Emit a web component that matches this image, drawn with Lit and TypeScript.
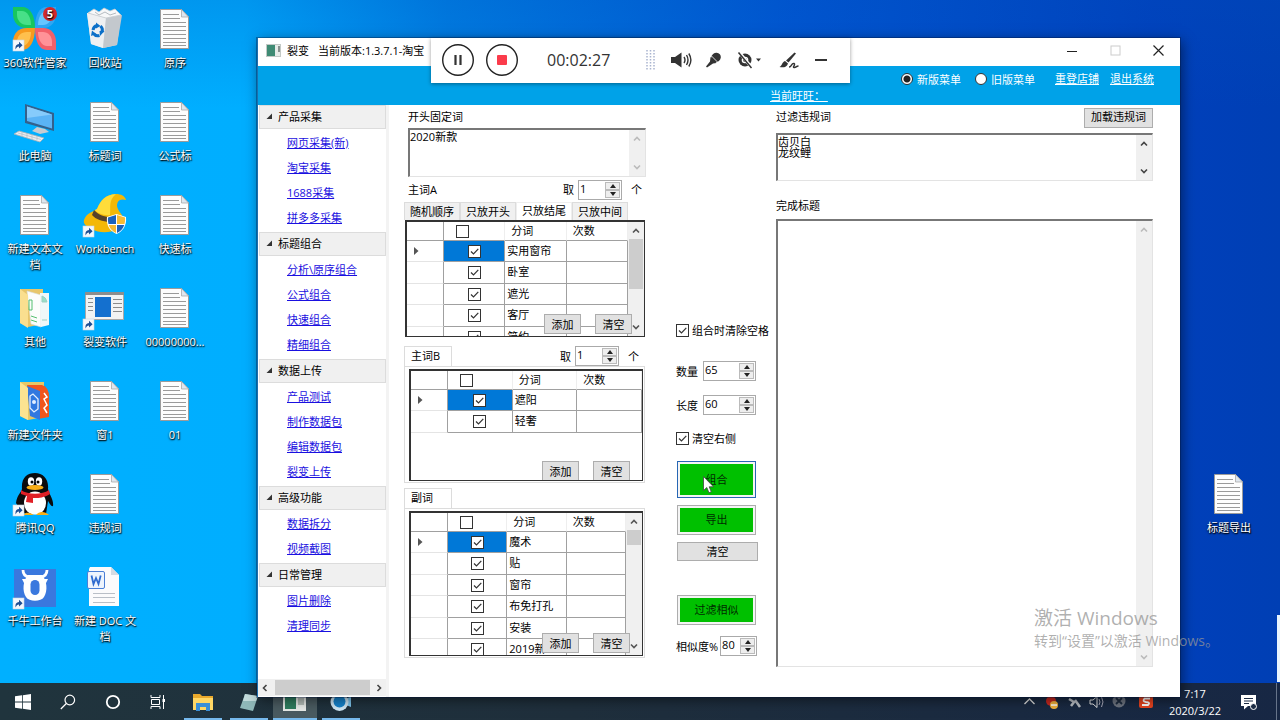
import { LitElement, html, svg, css, nothing } from "lit";
import type { TemplateResult, SVGTemplateResult } from "lit";
import { customElement, property } from "lit/decorators.js";
import { classMap } from "lit/directives/class-map.js";

const shortcut = svg`
  <rect x="0" y="33" width="11" height="11" fill="#f4f8fc" stroke="#c9d6e2" stroke-width=".6"/>
  <path d="M2.600 42.400C2 39 3.400 37 6 36.900V34.800L9.600 38.200 6 41.400V39.400C4.400 39.400 3.400 40.400 2.600 42.400Z" fill="#1f4f94"/>`;

const textDoc = svg`
  <path d="M7.500 2.500H28.500L35.500 10V41.500H7.500Z" fill="#fdfdfd" stroke="#9b9b9b"/>
  <path d="M28.500 2.500V10H35.500Z" fill="#dfe6ee" stroke="#a9a9a9" stroke-width=".8"/>
  <path d="M10 7.500H26M10 11.500H27M10 15.500H33M10 19.500H33M10 23.500H33M10 27.500H33M10 31.500H33M10 35.500H33M10 38.500H33" stroke="#8f8f8f" stroke-width=".9"/>`;

const glyphs: Record<string, SVGTemplateResult> = {
  doc: textDoc,
  petals: svg`
    <path d="M0 0H9C17 0 22 8 22 21H14C5 21 0 15 0 7Z" fill="#17c65f"/>
    <path d="M4 4H9C14 4 18 10 18 18H14C8 18 4 13 4 8Z" fill="#48e088"/>
    <path d="M43 0H34C26 0 22 8 22 21H30C38 21 43 15 43 7Z" fill="#2fa6f2"/>
    <path d="M39 4H34C29 4 25 10 25 18H30C35 18 39 13 39 8Z" fill="#66c6ff"/>
    <path d="M0 43H9C17 43 22 34 22 21H14C5 21 0 27 0 35Z" fill="#f79a1d"/>
    <path d="M4 39H9C14 39 18 33 18 25H14C8 25 4 29 4 35Z" fill="#ffc04d"/>
    <path d="M43 43H34C26 43 22 34 22 21H30C38 21 43 27 43 35Z" fill="#f2606a"/>
    <path d="M39 39H34C29 39 25 33 25 25H30C35 25 39 29 39 35Z" fill="#ff9298"/>
    <circle cx="37" cy="7" r="7" fill="#d3282c"/>
    <text x="37" y="11" text-anchor="middle" font-size="11" font-weight="700" fill="#fff">5</text>${shortcut}`,
  bin: svg`
    <path d="M4 6L38 8 34 38 20 41 8 37Z" fill="#d9dde1"/>
    <path d="M4 6L23 11 20 41 8 37Z" fill="#eef0f2"/>
    <path d="M23 11L39 8 34 38 20 41Z" fill="#c3c8cd"/>
    <path d="M5 6L11 2 16 5 21 1 27 4 32 2 38 8 23 11Z" fill="#f7f8f9" stroke="#c5cace" stroke-width=".8"/>
    <path d="M12 5L16 8 22 5 27 8 33 6" stroke="#b5bbc0" fill="none"/>
    <path d="M10 23A5.500 5.500 0 0 1 14 18.500M17.500 19A5.500 5.500 0 0 1 19 25M16.500 28.500A5.500 5.500 0 0 1 10.500 26.500" fill="none" stroke="#0c70c8" stroke-width="3"/>
    <path d="M13 15.500L17.500 19 13 21.500ZM21.500 24L17 29 16.500 24ZM8 29L9 23.500 13 27Z" fill="#0c70c8"/>`,
  pc: svg`
    <path d="M12 4L41 13V31L12 23Z" fill="#34618c"/>
    <path d="M14 6.500L39 14.500V28.500L14 21Z" fill="#5ab3f5"/>
    <path d="M14 6.500L39 14.500 14 18Z" fill="#86cbfb"/>
    <path d="M24 27L32 29 36 32 27 34 19 31Z" fill="#c7ccd2"/>
    <path d="M6 31L31 38 27 42 1 34Z" fill="#e9ecef" stroke="#a9b0b7" stroke-width=".8"/>
    <path d="M5 33L28 39.500M9 32V36M14 33V38M19 35V39M24 36V40" stroke="#b5bcc3" stroke-width=".7"/>`,
  hat: svg`
    <path d="M1 27C3 20 10 19 14 16C18 7 22 2 33 1C38 1 42 3 43 7C36 5 34 9 34 13C35 18 38 20 42 27C40 38 20 43 9 36C3 33 0 31 1 27Z" fill="#f4b806"/>
    <path d="M14 16C18 7 22 2 33 1C25 8 28 14 27 22C21 23 14 20 12 17Z" fill="#ffdc3a"/>
    <path d="M11 17C17 24 28 26 37 22L39 26C29 31 15 29 9 22Z" fill="#57422b"/>
    <path d="M24 24L33.500 21 43 24C44 33 39 39 33.500 41C27 38 23 33 24 24Z" fill="#fff"/>
    <path d="M25 24.500L33 22V31H25.500C25 29 24.800 27 25 24.500Z" fill="#1b62bd"/>
    <path d="M34 22L42 24.500C42.300 27 42 29 41.500 31H34Z" fill="#f8bb33"/>
    <path d="M25.700 32H33V40C29 38 27 35.500 25.700 32Z" fill="#f8bb33"/>
    <path d="M34 32H41.300C40 36 37 38.500 34 40Z" fill="#1b62bd"/>${shortcut}`,
  folder: svg`
    <path d="M7 3H30V38L15 41 7 37Z" fill="#e8c66b"/>
    <path d="M14 5L28 9V41L18 38Z" fill="#fcfdfc" stroke="#d6dcd8" stroke-width=".6"/>
    <path d="M27 7H36V39L28 41Z" fill="#f0f7f8"/>
    <path d="M29 10Q33 11 34 16H29ZM29 34H34" fill="#99dfc6" stroke="#9dcfc2"/>
    <path d="M7 3L15 9V42L7 37Z" fill="#fadf8f"/>
    <path d="M16 14H19V24H16ZM18 30L24 32M18 34L24 36" fill="none" stroke="#55bf70"/>`,
  folderArt: svg`
    <path d="M7 3H31V38L15 41 7 37Z" fill="#e7c766"/>
    <path d="M14 6H29Q36 8 36 18V38L25 40Z" fill="#f1561d"/>
    <path d="M14 7L27 12V41L17 37Z" fill="#3178e0"/>
    <path d="M17 17L20 15 25 20V30L21 33 17 29Z" fill="none" stroke="#e3efff" stroke-width="1.300"/>
    <circle cx="21" cy="23" r="2" fill="#e3efff"/>
    <path d="M31 14L34 18 31 20 34 26 31 29 34 34" fill="none" stroke="#fff" stroke-width="1.500"/>
    <path d="M7 3L15 9V41L7 37Z" fill="#fbe391"/>`,
  appWin: svg`
    <rect x="2.500" y="6.500" width="38" height="27" fill="#f3f3f3" stroke="#a8a8a8"/>
    <rect x="2" y="6" width="39" height="3" fill="#8d8d8d"/>
    <rect x="12" y="11" width="16" height="20" fill="#1470cf"/>
    <path d="M5 12.500H10M5 16.500H10M5 20.500H10M5 24.500H10M30 13.500H39M30 17.500H39M30 21.500H39M30 25.500H39" stroke="#8b8b8b"/>${shortcut}`,
  penguin: svg`
    <path d="M13 42L8 39 3 31C4 23 8 21 9 17C8 6 14 1 22 1C30 1 36 7 35 17C36 22 41 28 40 34C38 35 36 30 35 29L33 42Z" fill="#0b0b0d"/>
    <ellipse cx="22" cy="31" rx="11" ry="11.500" fill="#fff"/>
    <ellipse cx="18" cy="9.500" rx="3.200" ry="4.200" fill="#fff"/><ellipse cx="26" cy="9.500" rx="3.200" ry="4.200" fill="#fff"/>
    <circle cx="19" cy="10" r="1.500"/><circle cx="25" cy="10" r="1.500"/>
    <ellipse cx="22" cy="15.500" rx="8.500" ry="2.600" fill="#f9ae16"/>
    <path d="M8 18C15 23 29 23 36 18L37 22C29 27 21 26 20 26V31L13 30 14 24 8 22Z" fill="#e01f26"/>
    <path d="M10 43C13 39 18 41 21 43ZM23 43C26 39 32 39 36 43Z" fill="#f9ae16"/>${shortcut}`,
  bull: svg`
    <rect x="1" y="4" width="42" height="38" fill="#3a78de"/>
    <path d="M10 5Q10 11 16 12M34 5Q34 11 28 12" stroke="#fff" stroke-width="2.800" fill="none"/>
    <path d="M9 14H35L33 18H11Z" fill="#fff"/>
    <path d="M15 10H29C34 15 35 26 31 32C28 37 16 37 13 32C9 26 10 15 15 10Z" fill="#fff"/>
    <rect x="17.500" y="15" width="9" height="15" rx="4.500" fill="#3a78de"/>${shortcut}`,
  word: svg`
    <path d="M7 2H28L36 10V41H6V4Z" fill="#fbfbfc"/>
    <path d="M28 2V10H36Z" fill="#d5dbe2"/>
    <path d="M10 28.500H32M10 32.500H32M10 37.500H32" stroke="#b9bfc7"/>
    <rect x="4.500" y="6.500" width="17" height="17" rx="1.500" fill="#eef4fd" stroke="#4b7fd6"/>
    <path d="M8.500 10.500L10.500 19 13 13 15.500 19 17.700 10.500" fill="none" stroke="#2f6bcf" stroke-width="1.800"/>`,
};

const glyph = (name: string) =>
  html`<svg width="44" height="44" viewBox="0 0 44 44" aria-hidden="true" overflow="visible">${glyphs[name]}</svg>`;

const desktopColumns: [string, string][][] = [
  [["petals", "360软件管家"], ["pc", "此电脑"], ["doc", "新建文本文\n档"], ["folder", "其他"], ["folderArt", "新建文件夹"], ["penguin", "腾讯QQ"], ["bull", "千牛工作台"]],
  [["bin", "回收站"], ["doc", "标题词"], ["hat", "Workbench"], ["appWin", "裂变软件"], ["doc", "窗1"], ["doc", "违规词"], ["word", "新建 DOC 文\n档"]],
  [["doc", "原序"], ["doc", "公式标"], ["doc", "快速标"], ["doc", "00000000..."], ["doc", "01"]],
];

const menu: [string, string[]][] = [
  ["产品采集", ["网页采集(新)", "淘宝采集", "1688采集", "拼多多采集"]],
  ["标题组合", ["分析\\原序组合", "公式组合", "快速组合", "精细组合"]],
  ["数据上传", ["产品测试", "制作数据包", "编辑数据包", "裂变上传"]],
  ["高级功能", ["数据拆分", "视频截图"]],
  ["日常管理", ["图片删除", "清理同步"]],
];

const uiFont = css`"Open Sans", "Noto Sans CJK SC", sans-serif`;

const tick = css`url("data:image/svg+xml,%3Csvg xmlns='http://www.w3.org/2000/svg' viewBox='0 0 11 11'%3E%3Cpath d='M2 5.500L4.500 8 9.300 2.800' fill='none' stroke='%23333' stroke-width='1.200'/%3E%3C/svg%3E")`;

const controls = css`
  * { box-sizing: border-box; }
  button, input, textarea { font: inherit; color: inherit; margin: 0; padding: 0; border-radius: 0; }
  input[type="checkbox"] {
    appearance: none;
    flex: none;
    width: 13px;
    height: 13px;
    border: 1px solid #333;
    background: #fff center / 11px 11px no-repeat;
    display: block;
  }
  input[type="checkbox"]:checked { background-image: ${tick}; }
  .push { background: #e1e1e1; border: 1px solid #adadad; color: #000; }
  .bar { flex: none; width: 16px; background: #f0f0f0; display: flex; flex-direction: column; justify-content: space-between; align-items: center; padding: 5px 0; }
  .bar svg { display: block; flex: none; }
  .thumb { width: 14px; background: #cdcdcd; margin-top: 4px; }
  .fill { flex: 1; }
`;

const chevron = (up: boolean, color: string) => html`<svg width="8" height="8" viewBox="0 0 8 8" aria-hidden="true">
  <path d=${up ? "M1 5.500L4 2.500L7 5.500" : "M1 2.500L4 5.500L7 2.500"} fill="none" stroke=${color} stroke-width="1.600"/></svg>`;

/** Word list with a check column, shown inside each keyword group. */
@customElement("word-table")
export class WordTable extends LitElement {
  @property({ attribute: false }) words: string[] = [];
  @property({ type: Number }) thumb = 0;

  static styles = [controls, css`
    :host { display: flex; overflow: hidden; background: #fff; position: relative; border: 2px solid #333; border-right-width: 1px; border-bottom-width: 1px; font: 11px/15px ${uiFont}; color: #000; }
    .holder { flex: 1; min-width: 0; }
    table { width: 100%; border-collapse: separate; border-spacing: 0; table-layout: fixed; }
    .mark { width: 37px; }
    th, td { padding: 0 2px 2px; border-right: 1px solid #a0a0a0; border-bottom: 1px solid #a0a0a0; height: 21px; text-align: left; font-weight: 400; white-space: nowrap; }
    tr:nth-child(even) td { height: 22px; }
    th { height: 19px; padding-left: 6px; border-right-color: #eee; }
    th.mark, td.mark { border-right-color: #a0a0a0; }
    td.mark { border-bottom-color: #e4e4e4; padding: 0 0 0 6px; }
    .pick { padding-bottom: 0; }
    th.pick { padding-left: 12px; }
    td.pick input { margin: 0 auto; }
    tr:first-child td.pick { background: #0078d7; }
    svg { display: block; }
    .adds { position: absolute; right: 12px; bottom: 2px; display: flex; gap: 14px; }
    .adds.low { bottom: -1px; }
    .adds button { width: 37px; height: 20px; }
  `];

  render() {
    return html`
      <div class="holder">
        <table>
          <thead><tr>
            <th class="mark"></th>
            <th class="pick"><input type="checkbox" aria-label="全选"></th>
            <th>分词</th><th>次数</th>
          </tr></thead>
          <tbody>${this.words.map((w, i) => html`<tr>
            <td class="mark">${i ? nothing : html`<svg width="6" height="8" viewBox="0 0 6 8" aria-hidden="true"><path d="M1 0L5.500 4 1 8Z" fill="#555"/></svg>`}</td>
            <td class="pick"><input type="checkbox" checked aria-label=${w}></td>
            <td>${w}</td><td></td>
          </tr>`)}</tbody>
        </table>
      </div>
      ${this.thumb ? html`<div class="bar">${chevron(true, "#555")}<span class="thumb" style="height:${this.thumb}px"></span><span class="fill"></span>${chevron(false, "#555")}</div>` : nothing}
      <div class=${classMap({ adds: true, low: !this.thumb })}><button class="push">添加</button><button class="push">清空</button></div>`;
  }
}

@customElement("app-root")
export class AppRoot extends LitElement {
  static styles = [controls, css`
    :host {
      display: block;
      position: relative;
      height: 100vh;
      overflow: hidden;
      font: 11px/15px ${uiFont};
      color: #000;
      background:
        linear-gradient(180deg, rgba(0, 80, 190, .25), rgba(0, 80, 190, 0) 15%),
        linear-gradient(90deg, #00b0ff 0, #00aeff 19%, #0080e4 35%, #0056d2 62%, #0040bc 90%, #003fb4 100%);
    }
    .icons { display: flex; justify-content: space-between; align-items: flex-start; }
    .columns { display: flex; }
    .column { width: 70px; }
    .right-column { width: 70px; padding-top: 465px; margin-right: 16px; }
    .item { height: 93px; padding-top: 7px; display: flex; flex-direction: column; align-items: center; gap: 4px; color: #fff; text-decoration: none; line-height: 16px; text-align: center; white-space: pre; text-shadow: 0 1px 2px #000, 1px 1px 1px rgba(0, 0, 0, .8); }
    .item svg { flex: none; }

    .taskbar { position: absolute; left: 0; right: 0; bottom: 0; height: 37px; display: flex; background: linear-gradient(90deg, #20343d, #1f2f3c 45%, #172744 100%); color: #fff; }
    .taskbar button { width: 45px; border: 0; background: none; display: grid; place-items: center; }
    .taskbar .running { width: 38px; margin: 0 4px; box-shadow: inset 0 -2px #76b9ed; }
    .taskbar .active { width: 44px; margin: 0 1px; background: #4a5b61; }
    .tray { margin-left: auto; display: flex; align-items: center; }
    .tray svg { display: block; }
    .clock { width: 76px; text-align: center; font-size: 11px; line-height: 17px; }
    .taskbar .note { width: 32px; height: 37px; }
    .edge { border-left: 1px solid #66748a; height: 37px; width: 4px; margin-left: 11px; }
    .sliver { position: absolute; right: 0; bottom: 38px; width: 3px; height: 67px; background: #e8f4fd; }

    .window { position: absolute; left: 257px; right: 100px; top: 38px; bottom: 23px; background: #fff; border-left: 1px solid #1d6fae; box-shadow: 0 0 0 1px rgba(0, 20, 60, .35), 2px 3px 12px rgba(0, 0, 0, .5); display: flex; flex-direction: column; }
    .title { height: 28px; flex: none; display: flex; align-items: center; padding: 0 8px 3px 8px; gap: 5px; white-space: pre; }
    .title .version { margin-left: 4px; }
    .title button { border: 0; background: none; width: 28px; height: 20px; margin-left: 10px; display: grid; place-items: center; }
    .band { height: 39px; flex: none; background: #00a2e8; color: #fff; display: flex; flex-direction: column; }
    .band .line { display: flex; justify-content: flex-end; align-items: center; padding: 3px 26px 0 0; height: 21px; }
    .band .line + .line { justify-content: flex-start; padding: 0 0 0 512px; height: 17px; }
    .band a { color: #fff; margin-left: 11px; white-space: pre; }
    .band .line + .line a { margin: 0; }
    .band label { display: flex; align-items: center; gap: 4px; margin-right: 14px; padding-top: 2px; }
    .band label + label { margin-right: 9px; }
    input[type="radio"] { appearance: none; width: 12px; height: 12px; border: 1px solid #333; border-radius: 50%; background: #fff; }
    input[type="radio"]:checked { background: radial-gradient(circle, #222 0 3px, #fff 4px); }

    .body { flex: 1; min-height: 0; display: flex; }
    .side { flex: none; width: 131px; display: flex; flex-direction: column; border-right: 3px solid #f3f3f3; }
    .group { padding: 0 0 2px 1px; }
    .group h2 { margin: 0 0 1px; height: 24px; font: inherit; background: #f0f0f0; border: 1px solid #dcdcdc; display: flex; align-items: center; gap: 5px; padding: 0 0 2px 6px; }
    .group a { display: flex; align-items: center; width: fit-content; margin-left: 28px; height: 25px; color: #1a10e0; text-underline-offset: 1px; }
    .hscroll { margin-top: auto; height: 17px; margin-bottom: 1px; background: #f0f0f0; display: flex; align-items: center; justify-content: space-between; padding: 0 3px; gap: 5px; }
    .hscroll span { width: 95px; height: 15px; background: #cdcdcd; }
    .hscroll svg { transform: rotate(-90deg); }

    .main { flex: 1; min-width: 0; display: grid; grid-template-columns: 242px 130px 1fr; padding: 0 27px 30px 15px; }
    .caption { height: 23px; display: flex; align-items: center; padding-left: 4px; }
    .area { display: flex; border: 1px solid #e3e3e3; border-top: 2px solid #777; border-left: 2px solid #777; background: #fff; }
    .area textarea { flex: 1; min-width: 0; width: 0; border: 0; outline: 0; resize: none; overflow: hidden; background: none; display: block; }
    .fixed { height: 49px; margin-left: 4px; }
    .fixed textarea { line-height: 13px; }
    .take { display: flex; align-items: center; height: 20px; }
    .take .fill { padding-left: 4px; }
    .take.loose { height: 25px; padding-right: 4px; }
    .take label { margin-right: 4px; }
    .take .unit { margin-left: 9px; }
    .spin { display: flex; height: 20px; border: 1px solid #aaa; background: #fff; }
    .spin input { border: 0; outline: 0; background: none; padding: 0 0 3px 1px; width: 25px; }
    .spin div { width: 15px; margin: 1px; display: grid; grid-template-rows: 1fr 1fr; }
    .spin button { background: #eee; border: 1px solid #bbb; display: grid; place-items: center; min-height: 0; }
    .tabs { display: flex; height: 18px; }
    .tabs button { width: 56px; border: 1px solid #dcdcdc; border-bottom: 0; background: #f0f0f0; height: 18px; white-space: nowrap; line-height: 15px; }
    .tabs .on { background: #fff; border-color: #eee; padding-bottom: 4px; }
    .list-a { height: 117px; margin: 0 1px 0 1px; }
    .block { margin: 9px 1px 0 0; }
    .block + .block { margin-top: 5px; }
    .block .take { padding-right: 6px; }
    .tab { align-self: stretch; width: 48px; margin-right: auto; border: 1px solid #dcdcdc; border-bottom: 0; padding: 1px 0 0 6px; }
    .frame { border: 1px solid #dcdcdc; padding: 2px 1px 1px 4px; height: 117px; }
    .frame word-table { height: 100%; }
    .tall { height: 150px; }

    .mid { padding: 216px 18px 0 30px; display: flex; flex-direction: column; }
    .check { display: flex; align-items: center; gap: 3px; white-space: nowrap; height: 19px; }
    .over { position: relative; z-index: 1; background: #fff; width: 99px; }
    .field { display: flex; align-items: center; gap: 5px; height: 20px; margin-top: 21px; }
    .field + .field { margin-top: 14px; }
    .field .spin { width: 53px; }
    .field .spin input { flex: 1; min-width: 0; }
    .near .spin { width: 37px; }
    .near { gap: 2px; white-space: nowrap; }
    .mid .near { margin-top: 11px; }
    .field + .check { margin-top: 14px; }
    .go { background: #00c000; border: 1px solid #adadad; box-shadow: inset 0 0 0 2px #f4f4f4; width: 79px; height: 30px; margin: 7px 0 0 1px; padding-bottom: 1px; color: #012b01; }
    .mid .first { height: 37px; margin-top: 13px; border-color: #2766b4; }
    .plain { height: 19px; width: 81px; margin: 7px 0 0 1px; }
    .mid .apart { margin-top: 34px; }

    .done { display: flex; flex-direction: column; min-width: 0; }
    .done .caption { padding-left: 0; justify-content: space-between; }
    .caption button { width: 69px; height: 20px; margin-top: 2px; padding-bottom: 2px; }
    .banned { height: 48px; margin-top: 5px; }
    .banned textarea { line-height: 11px; padding-top: 1px; }
    .done .second { height: 38px; padding-top: 10px; }
    .result { flex: 1; }

    .recorder { position: absolute; left: 431px; top: 38px; width: 419px; height: 45px; background: #fff; box-shadow: 0 1px 4px rgba(0, 0, 0, .4); display: flex; align-items: center; padding: 0 0 1px 10px; color: #333; }
    .recorder button { border: 0; background: none; display: grid; place-items: center; flex: none; }
    .round { width: 34px; height: 34px; margin-right: 10px; }
    .time { font-size: 16px; line-height: 22px; width: 65px; margin: 0 34px 0 18px; }
    .grip { margin-right: 14px; }
    .tool { width: 24px; margin-right: 8px; }
    .tool.wide { width: 32px; margin-right: 12px; }
    .watermark { position: absolute; left: 1034px; bottom: 69px; color: rgba(150, 150, 150, .75); font-size: 14px; line-height: 20px; white-space: nowrap; }
    .watermark strong { display: block; font-weight: 400; font-size: 19px; line-height: 26px; }
    .cursor { position: absolute; left: 703px; top: 476px; }
  `];

  private spinner(id: string, value: string) {
    return html`<span class="spin"><input id=${id} .value=${value} inputmode="numeric"><div>
      <button aria-label="增加"><svg width="6" height="4" viewBox="0 0 6 4"><path d="M0 4L3 0 6 4Z" fill="#222"/></svg></button>
      <button aria-label="减少"><svg width="6" height="4" viewBox="0 0 6 4"><path d="M0 0L3 4 6 0Z" fill="#222"/></svg></button>
    </div></span>`;
  }

  private take(id: string, title: TemplateResult, extra: Record<string, boolean> = {}) {
    return html`<div class=${classMap({ take: true, ...extra })}>${title}
      <label for=${id}>取</label>${this.spinner(id, "1")}<span class="unit">个</span></div>`;
  }

  private area(id: string, cls: string, text: string, arrow: string) {
    return html`<div class="area ${cls}"><textarea id=${id} .value=${text}></textarea>
      <div class="bar">${chevron(true, arrow)}${chevron(false, arrow)}</div></div>`;
  }

  private renderWindow() {
    return html`<section class="window">
      <header class="title">
        <svg width="16" height="14" viewBox="0 0 16 14" aria-hidden="true"><rect x=".5" y=".5" width="14" height="12" fill="#e6ebe8" stroke="#c3c9c6"/><rect x="1" y="1" width="8" height="11" fill="#3f8b74"/><rect x="12" y="2" width="2" height="6" fill="#8a938f"/></svg>
        <span>裂变</span><span class="fill version">当前版本:1.3.7.1-淘宝</span>
        <button aria-label="最小化"><svg width="10" height="10" viewBox="0 0 10 10"><path d="M0 5.500H10" stroke="#222"/></svg></button>
        <button aria-label="最大化" disabled><svg width="11" height="11" viewBox="0 0 11 11"><rect x="1" y="1" width="9" height="9" fill="none" stroke="#ccc"/></svg></button>
        <button aria-label="关闭"><svg width="11" height="11" viewBox="0 0 11 11"><path d="M.5 .5L10.500 10.500M10.500 .5L.5 10.500" stroke="#222" stroke-width="1.200"/></svg></button>
      </header>
      <div class="band">
        <div class="line">
          <label><input type="radio" name="menu" checked>新版菜单</label>
          <label><input type="radio" name="menu">旧版菜单</label>
          <a href="#relogin">重登店铺</a><a href="#exit">退出系统</a>
        </div>
        <div class="line"><a href="#user">当前旺旺： </a></div>
      </div>
      <div class="body">
        <nav class="side">
          ${menu.map(([name, links]) => html`<div class="group">
            <h2><svg width="7" height="7" viewBox="0 0 7 7" aria-hidden="true"><path d="M6 .5V6H.5Z" fill="#333"/></svg>${name}</h2>
            ${links.map((l) => html`<a href="#menu">${l}</a>`)}
          </div>`)}
          <div class="hscroll">${chevron(true, "#444")}<span></span><svg width="8" height="8" viewBox="0 0 8 8" aria-hidden="true"><path d="M1 2.500L4 5.500L7 2.500" fill="none" stroke="#444" stroke-width="1.600"/></svg></div>
        </nav>
        <main class="main">
          <div>
            <label class="caption" for="head">开头固定词</label>
            ${this.area("head", "fixed", "2020新款", "#bbb")}
            ${this.take("takeA", html`<span class="fill">主词A</span>`, { loose: true })}
            <div class="tabs"><button>随机顺序</button><button>只放开头</button><button class="on">只放结尾</button><button>只放中间</button></div>
            <word-table class="list-a" .words=${["实用窗帘", "卧室", "遮光", "客厅", "简约"]} .thumb=${50}></word-table>
            <div class="block">
              ${this.take("takeB", html`<span class="tab">主词B</span>`)}
              <div class="frame"><word-table .words=${["遮阳", "轻奢"]}></word-table></div>
            </div>
            <div class="block">
              <div class="take"><span class="tab">副词</span></div>
              <div class="frame tall"><word-table .words=${["魔术", "贴", "窗帘", "布免打孔", "安装", "2019新"]} .thumb=${15}></word-table></div>
            </div>
          </div>
          <div class="mid">
            <label class="check over"><input type="checkbox" checked>组合时清除空格</label>
            <div class="field"><label for="count">数量</label>${this.spinner("count", "65")}</div>
            <div class="field"><label for="len">长度</label>${this.spinner("len", "60")}</div>
            <label class="check"><input type="checkbox" checked>清空右侧</label>
            <button class="go first">组合</button>
            <button class="go">导出</button>
            <button class="push plain">清空</button>
            <button class="go apart">过滤相似</button>
            <div class="field near"><label for="sim">相似度%</label>${this.spinner("sim", "80")}</div>
          </div>
          <div class="done">
            <div class="caption"><label for="ban">过滤违规词</label><button class="push">加载违规词</button></div>
            ${this.area("ban", "banned", "齿贝白\n龙纹鲤", "#444")}
            <label class="caption second" for="out">完成标题</label>
            ${this.area("out", "result", "", "#bbb")}
          </div>
        </main>
      </div>
    </section>`;
  }

  private renderRecorder() {
    return html`<section class="recorder">
      <button class="round" aria-label="暂停"><svg width="34" height="34" viewBox="0 0 34 34"><circle cx="17" cy="17" r="15.300" fill="none" stroke="#222" stroke-width="1.400"/><path d="M14.500 12V22M19.500 12V22" stroke="#333" stroke-width="2.200"/></svg></button>
      <button class="round" aria-label="停止"><svg width="34" height="34" viewBox="0 0 34 34"><circle cx="17" cy="17" r="15.300" fill="none" stroke="#222" stroke-width="1.400"/><rect x="12" y="12" width="10" height="10" rx="1" fill="#fb3b4b"/></svg></button>
      <span class="time">00:02:27</span>
      <svg class="grip" width="9" height="20" viewBox="0 0 9 20" aria-hidden="true"><path d="M1 0V20M4.500 0V20M8 0V20" stroke="#a9b4cf" stroke-width="1.500" stroke-dasharray="1.500 1.500"/></svg>
      <button class="tool" aria-label="扬声器"><svg width="21" height="16" viewBox="0 0 21 16"><path d="M0 5H4L10.500 .5V15.500L4 11H0Z" fill="#333"/><path d="M13 5Q15 8 13 11M15.500 3Q18.500 8 15.500 13M17.800 1.500Q22 8 17.800 14.500" fill="none" stroke="#333" stroke-width="1.400"/></svg></button>
      <button class="tool" aria-label="麦克风"><svg width="17" height="16" viewBox="0 0 17 16"><ellipse cx="11" cy="5.500" rx="5" ry="4.500" transform="rotate(-40 11 5.500)" fill="#333"/><path d="M5.500 5L11.500 11L8 11.500L2 15.500L1 14.500L5 9.500Z" fill="#333"/><path d="M6.500 4L12.500 10" stroke="#fff" stroke-width=".8"/></svg></button>
      <button class="tool wide" aria-label="摄像头"><svg width="25" height="18" viewBox="0 0 25 18"><circle cx="8" cy="9" r="6.500" fill="#333"/><circle cx="8" cy="9" r="3.300" fill="#fff"/><circle cx="8" cy="9" r="1.900" fill="#333"/><path d="M2 1L15 17" stroke="#fff" stroke-width="3"/><path d="M1.500 1.500L14.500 17" stroke="#333" stroke-width="1.500"/><path d="M19 7.500H24L21.500 10.500Z" fill="#333"/></svg></button>
      <button class="tool" aria-label="画笔"><svg width="20" height="17" viewBox="0 0 20 17"><path d="M15.500 .5L17 1.500 9.500 10.500 7 8.500Z" fill="#333"/><path d="M6 9L9 11.500C8 15 4.500 16 .5 15C3 14 3 10 6 9Z" fill="#333"/><path d="M10 15C13 15 12 11 15 11.500C17 12.500 13 15 15 15.500C17 16 17 14 19.500 14" fill="none" stroke="#333" stroke-width="1.400"/></svg></button>
      <button class="tool" aria-label="收起"><svg width="12" height="4" viewBox="0 0 12 4"><path d="M0 2H12" stroke="#333" stroke-width="2"/></svg></button>
    </section>`;
  }

  private renderTaskbar() {
    return html`<footer class="taskbar">
      <button aria-label="开始"><svg width="16" height="16" viewBox="0 0 16 16"><path d="M0 2.300L7 1.300V7.600H0ZM7.800 1.200L16 0V7.600H7.800ZM0 8.400H7V14.700L0 13.700ZM7.800 8.400H16V16L7.800 14.800Z" fill="#fff"/></svg></button>
      <button aria-label="搜索"><svg width="16" height="16" viewBox="0 0 16 16"><circle cx="9.800" cy="6" r="4.800" fill="none" stroke="#fff" stroke-width="1.200"/><path d="M6.300 9.500L.8 15" stroke="#fff" stroke-width="1.200"/></svg></button>
      <button aria-label="语音助手"><svg width="16" height="16" viewBox="0 0 16 16"><circle cx="8" cy="8" r="6.200" fill="none" stroke="#fff" stroke-width="1.800"/></svg></button>
      <button aria-label="任务视图"><svg width="16" height="16" viewBox="0 0 16 16"><path d="M1 1V3.500H10V1M1 15V12.500H10V15M1.500 5.500H9.500V10.500H1.500ZM13.500 1V15" fill="none" stroke="#fff"/><rect x="12.500" y="5" width="2.500" height="3" fill="#fff"/></svg></button>
      <button class="running" aria-label="文件资源管理器"><svg width="20" height="18" viewBox="0 0 20 18"><path d="M0 1H7L9 3H20V17H0Z" fill="#e9a92c"/><path d="M0 5H20V17H0Z" fill="#ffd765"/><path d="M3 18V10H17V18H13V14H7V18Z" fill="#3a8fd8"/></svg></button>
      <button class="running" aria-label="记事本"><svg width="20" height="20" viewBox="0 0 20 20"><path d="M6 2L19 4 14 19 1 16Z" fill="#8fb8b9"/><path d="M6 2L19 4 17 9 4 9Z" fill="#c3dcdc"/></svg></button>
      <button class="running active" aria-label="裂变"><svg width="24" height="20" viewBox="0 0 24 20"><rect width="23" height="19" fill="#e8ebe8"/><rect x="2" y="2" width="11" height="15" fill="#2f7d5e"/><rect x="15" y="6" width="6" height="7" fill="#b4bdb8"/></svg></button>
      <button class="running" aria-label="录屏"><svg width="22" height="20" viewBox="0 0 22 20"><path d="M16 7L21 4V15L16 13Z" fill="#7ec6ee"/><circle cx="9.500" cy="10" r="9" fill="#cfe8f6"/><circle cx="9.500" cy="9.500" r="6" fill="#1583cc"/></svg></button>
      <div class="tray">
        <svg width="134" height="20" viewBox="1022 692 134 20" aria-hidden="true">
          <path d="M1023.500 704L1028.500 699L1033.500 704" fill="none" stroke="#ddd" stroke-width="1.300"/>
          <circle cx="1050" cy="701" r="5" fill="#c9281f"/><circle cx="1053" cy="705" r="4" fill="#f1b23c"/><path d="M1050 705H1056" stroke="#fff" stroke-width="1.500"/>
          <path d="M1068 699L1073 702 1070 706M1074 700L1079 707" stroke="#b9bdc4" stroke-width="2.500" fill="none"/>
          <path d="M1089 700H1092L1096 696.500V707.500L1092 704H1089Z" fill="none" stroke="#e5e5e5"/><path d="M1098 699Q1100 702 1098 705M1100.500 697Q1103.500 702 1100.500 707" fill="none" stroke="#aab"/>
          <circle cx="1118" cy="701" r="6.500" fill="#6d7480"/><path d="M1115 698L1121 704M1121 698L1115 704" stroke="#1c2a3e" stroke-width="1.800"/>
          <rect x="1138" y="695" width="14" height="13" rx="2" fill="#e8431f"/><path d="M1149 698.500H1143.500Q1141 701.500 1145 702Q1150 702.500 1147 705H1141" fill="none" stroke="#fff" stroke-width="1.800"/>
        </svg>
        <div class="clock">7:17<br>2020/3/22</div>
        <button class="note" aria-label="通知"><svg width="16" height="16" viewBox="0 0 16 16"><path d="M0 1H15V12H7L3 15.500V12H0Z" fill="#fff"/><path d="M3 4.500H12M3 7H12M3 9.500H8" stroke="#1b2b44"/><circle cx="12.500" cy="12.500" r="3" fill="#1b2b44" stroke="#fff"/></svg></button>
        <span class="edge"></span>
      </div>
    </footer>`;
  }

  render() {
    return html`
      <div class="icons">
        <div class="columns">${desktopColumns.map((col) => html`<div class="column">
          ${col.map(([icon, name]) => html`<a class="item" href="#open">${glyph(icon)}<span>${name}</span></a>`)}
        </div>`)}</div>
        <div class="right-column"><a class="item" href="#open">${glyph("doc")}<span>标题导出</span></a></div>
      </div>
      ${this.renderTaskbar()}
      <span class="sliver"></span>
      ${this.renderWindow()}
      ${this.renderRecorder()}
      <div class="watermark"><strong>激活 Windows</strong>转到“设置”以激活 Windows。</div>
      <svg class="cursor" width="12" height="18" viewBox="0 0 12 18" aria-hidden="true"><path d="M.5 .5V14.500L3.800 11.500 6 16.800 8.300 15.800 6.200 10.800H10.500Z" fill="#fff" stroke="#444" stroke-width=".8"/></svg>`;
  }
}
